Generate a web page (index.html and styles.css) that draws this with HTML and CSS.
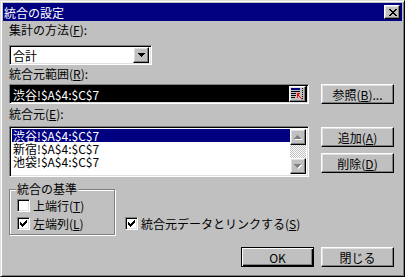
FILE: index.html
```html
<!DOCTYPE html>
<html lang="ja">
<head>
  <meta charset="UTF-8">
  <title>統合の設定</title>
  <link rel="stylesheet" href="styles.css">
</head>
<body>
  <div class="dialog">
    <!-- Title bar -->
    <div class="titlebar">
      <span class="title">統合の設定</span>
      <span class="close-btn raised">
        <svg width="8" height="7" viewBox="0 0 8 7" shape-rendering="crispEdges">
          <path fill="#000" d="M0 0h2v1H0zM6 0h2v1H6zM1 1h2v1H1zM5 1h2v1H5zM2 2h4v1H2zM3 3h2v1H3zM2 4h4v1H2zM1 5h2v1H1zM5 5h2v1H5zM0 6h2v1H0zM6 6h2v1H6z"/>
        </svg>
      </span>
    </div>

    <div class="content">
      <!-- Function -->
      <div class="section">
        <div class="label">集計の方法(<u>F</u>):</div>
        <div class="combo sunken">
          <span class="combo-value">合計</span>
          <span class="combo-btn raised">
            <svg width="7" height="4" viewBox="0 0 7 4" shape-rendering="crispEdges">
              <path fill="#000" d="M0 0h7v1H0zM1 1h5v1H1zM2 2h3v1H2zM3 3h1v1H3z"/>
            </svg>
          </span>
        </div>
      </div>

      <!-- Reference -->
      <div class="section ref-row">
        <div class="col-main">
          <div class="label">統合元範囲(<u>R</u>):</div>
          <div class="ref-field sunken">
            <span class="ref-value">渋谷!$A$4:$C$7</span>
            <span class="ref-btn raised">
              <svg width="13" height="12" viewBox="0 0 13 12" shape-rendering="crispEdges">
                <path fill="#000080" d="M0 0h9v2H0z"/>
                <path fill="#000" d="M0 3h9v1H0zM0 5h5v1H0zM0 7h5v1H0zM0 9h4v1H0z"/>
                <path fill="#000" d="M11 0h1v1h-1zM11 2h1v1h-1zM11 4h1v1h-1zM11 6h1v1h-1zM11 8h1v1h-1zM11 10h1v1h-1z"/>
                <path fill="#ff0000" d="M6 5h3v1H6zM6 6h2v1H6zM6 7h1v3H6zM7 7h1v1H7zM8 8h1v1H8zM9 9h1v1H9zM10 10h1v1h-1z"/>
              </svg>
            </span>
          </div>
        </div>
        <div class="col-side">
          <div class="btn raised">参照(<u>B</u>)...</div>
        </div>
      </div>

      <!-- All references -->
      <div class="section">
        <div class="label">統合元(<u>E</u>):</div>
        <div class="list-row">
          <div class="listbox sunken">
            <ul class="list-items">
              <li class="selected">渋谷!$A$4:$C$7</li>
              <li>新宿!$A$4:$C$7</li>
              <li>池袋!$A$4:$C$7</li>
            </ul>
            <div class="scrollbar">
              <span class="scroll-btn raised">
                <svg width="8" height="5" viewBox="0 0 8 5" shape-rendering="crispEdges">
                  <path fill="#fff" d="M4 1h1v1H4zM3 2h3v1H3zM2 3h5v1H2zM1 4h7v1H1z"/>
                  <path fill="#808080" d="M3 0h1v1H3zM2 1h3v1H2zM1 2h5v1H1zM0 3h7v1H0z"/>
                </svg>
              </span>
              <span class="scroll-track"></span>
              <span class="scroll-btn raised">
                <svg width="8" height="5" viewBox="0 0 8 5" shape-rendering="crispEdges">
                  <path fill="#fff" d="M1 1h7v1H1zM2 2h5v1H2zM3 3h3v1H3zM4 4h1v1H4z"/>
                  <path fill="#808080" d="M0 0h7v1H0zM1 1h5v1H1zM2 2h3v1H2zM3 3h1v1H3z"/>
                </svg>
              </span>
            </div>
          </div>
          <div class="col-side side-buttons">
            <div class="btn raised">追加(<u>A</u>)</div>
            <div class="btn raised">削除(<u>D</u>)</div>
          </div>
        </div>
      </div>

      <!-- Use labels in -->
      <div class="section options-row">
        <div class="group">
          <div class="group-title">統合の基準</div>
          <label class="check">
            <span class="check-box sunken"></span>
            <span>上端行(<u>T</u>)</span>
          </label>
          <label class="check">
            <span class="check-box sunken">
              <svg width="7" height="7" viewBox="0 0 7 7" shape-rendering="crispEdges">
                <path fill="#000" d="M6 0h1v3H6zM5 1h1v3H5zM4 2h1v3H4zM3 3h1v3H3zM2 4h1v3H2zM1 3h1v3H1zM0 2h1v3H0z"/>
              </svg>
            </span>
            <span>左端列(<u>L</u>)</span>
          </label>
        </div>
        <label class="check link-check">
          <span class="check-box sunken">
            <svg width="7" height="7" viewBox="0 0 7 7" shape-rendering="crispEdges">
              <path fill="#000" d="M6 0h1v3H6zM5 1h1v3H5zM4 2h1v3H4zM3 3h1v3H3zM2 4h1v3H2zM1 3h1v3H1zM0 2h1v3H0z"/>
            </svg>
          </span>
          <span>統合元データとリンクする(<u>S</u>)</span>
        </label>
      </div>

      <!-- Dialog buttons -->
      <div class="section actions">
        <div class="btn btn-default">OK</div>
        <div class="btn raised">閉じる</div>
      </div>
    </div>
  </div>
</body>
</html>
```

FILE: styles.css
```css
* {
  margin: 0;
  padding: 0;
  box-sizing: border-box;
}

body {
  width: 405px;
  height: 277px;
  font-family: "Noto Sans CJK JP", "Noto Sans", sans-serif;
  font-size: 12px;
  line-height: 13px;
  color: #000;
  background: #c0c0c0;
  overflow: hidden;
}

u {
  text-decoration: underline;
  text-underline-offset: 1px;
}

/* bevels */
.raised {
  background: #c0c0c0;
  border: 1px solid;
  border-color: #fff #000 #000 #fff;
  box-shadow: inset -1px -1px #808080, inset 1px 1px #dfdfdf;
}

.sunken {
  border: 1px solid;
  border-color: #808080 #fff #fff #808080;
  box-shadow: inset 1px 1px #000, inset -1px -1px #dfdfdf;
}

.dialog {
  width: 405px;
  height: 277px;
  background: #c0c0c0;
  border: 1px solid;
  border-color: #dfdfdf #000 #000 #dfdfdf;
  box-shadow: inset 1px 1px #fff, inset -1px -1px #808080;
  padding: 2px;
}

.titlebar {
  height: 18px;
  background: #000080;
  color: #fff;
  display: flex;
  align-items: center;
  justify-content: space-between;
  padding: 0 2px 0 1px;
}

.close-btn {
  width: 16px;
  height: 14px;
  display: flex;
  align-items: center;
  justify-content: center;
  padding-left: 1px;
}

.close-btn svg {
  display: block;
}

.content {
  padding: 2px 0 0 6px;
}

.label {
  height: 13px;
  white-space: nowrap;
}

/* combo */
.combo {
  width: 143px;
  height: 20px;
  margin-top: 9px;
  background: #fff;
  display: flex;
  align-items: center;
  padding: 2px;
}

.combo-value {
  flex: 1;
  padding-left: 1px;
}

.combo-btn,
.ref-btn,
.scroll-btn {
  width: 16px;
  height: 16px;
  display: flex;
  align-items: center;
  justify-content: center;
}

.combo-btn svg,
.ref-btn svg,
.scroll-btn svg {
  display: block;
}

/* reference row */
.ref-row {
  display: flex;
  align-items: flex-end;
  gap: 12px;
}

.col-main {
  width: 300px;
}

.col-side {
  width: 73px;
}

.ref-field {
  height: 20px;
  margin-top: 4px;
  padding: 2px;
  background: #000;
  color: #fff;
  display: flex;
  align-items: center;
}

.ref-value {
  flex: 1;
  padding-left: 1px;
}

.ref-btn {
  width: 17px;
}

.btn {
  height: 20px;
  width: 73px;
  display: flex;
  align-items: center;
  justify-content: center;
  white-space: nowrap;
}

.section + .section {
  margin-top: 3px;
}

.section.ref-row {
  margin-top: 2px;
}

/* list row */
.list-row {
  display: flex;
  gap: 12px;
  margin-top: 6px;
}

.listbox {
  width: 300px;
  height: 51px;
  background: #fff;
  padding: 2px;
  display: flex;
}

.list-items {
  flex: 1;
  list-style: none;
}

.list-items li {
  height: 13px;
  padding-left: 1px;
  white-space: nowrap;
}

.list-items .selected {
  background: #000080;
  color: #fff;
}

.scrollbar {
  width: 16px;
  display: flex;
  flex-direction: column;
}

.scroll-track {
  flex: 1;
  background: repeating-conic-gradient(#c0c0c0 0 25%, #fff 0 50%) 0 0 / 2px 2px;
}

.side-buttons {
  display: flex;
  flex-direction: column;
  gap: 6px;
  padding-top: 1px;
}

/* options */
.section.options-row {
  display: flex;
  align-items: flex-start;
  margin-top: 12px;
}

.group {
  width: 106px;
  border: 1px solid #808080;
  box-shadow: inset 1px 1px #fff, 1px 1px #fff;
  padding: 0 0 4px 7px;
}

.group-title {
  display: block;
  width: fit-content;
  margin: -8px 0 0 -1px;
  padding: 0 1px;
  background: #c0c0c0;
}

.check {
  display: flex;
  align-items: center;
  gap: 3px;
  height: 13px;
  white-space: nowrap;
}

.group .check {
  margin-top: 4px;
}

.group .check + .check {
  margin-top: 5px;
}

.check-box {
  width: 13px;
  height: 13px;
  background: #fff;
  display: flex;
  align-items: center;
  justify-content: center;
  flex-shrink: 0;
}

.check-box svg {
  display: block;
}

.link-check {
  margin: 28px 0 0 10px;
}

/* bottom buttons */
.section.actions {
  display: flex;
  justify-content: flex-end;
  gap: 7px;
  width: 385px;
  margin-top: 12px;
}

.btn-default {
  background: #c0c0c0;
  border: 1px solid #000;
  box-shadow: inset 1px 1px #fff, inset -1px -1px #000, inset -2px -2px #808080;
}
```
